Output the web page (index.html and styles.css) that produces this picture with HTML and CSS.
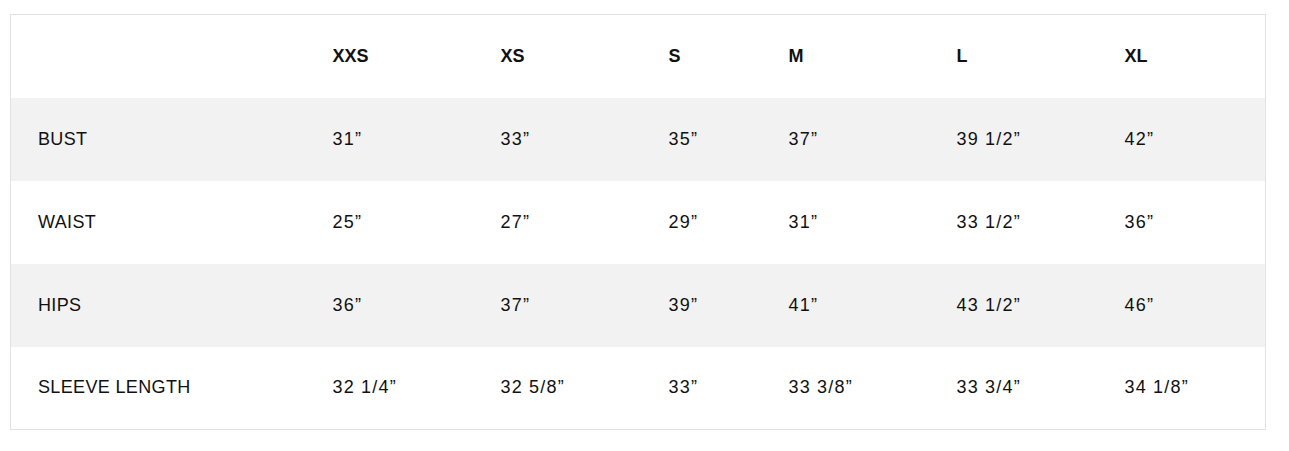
FILE: index.html
```html
<!DOCTYPE html>
<html>
<head>
<meta charset="utf-8">
<link rel="stylesheet" href="styles.css">
</head>
<body>
<div class="wrap">
<table class="size-table">
  <colgroup>
    <col class="c-label"><col class="c-w"><col class="c-w"><col class="c-n"><col class="c-w"><col class="c-w"><col class="c-last">
  </colgroup>
  <thead>
    <tr><th></th><th>XXS</th><th>XS</th><th>S</th><th>M</th><th>L</th><th>XL</th></tr>
  </thead>
  <tbody>
    <tr class="alt"><td class="lbl">BUST</td><td>31”</td><td>33”</td><td>35”</td><td>37”</td><td>39 1/2”</td><td>42”</td></tr>
    <tr><td class="lbl">WAIST</td><td>25”</td><td>27”</td><td>29”</td><td>31”</td><td>33 1/2”</td><td>36”</td></tr>
    <tr class="alt"><td class="lbl">HIPS</td><td>36”</td><td>37”</td><td>39”</td><td>41”</td><td>43 1/2”</td><td>46”</td></tr>
    <tr><td class="lbl">SLEEVE LENGTH</td><td>32 1/4”</td><td>32 5/8”</td><td>33”</td><td>33 3/8”</td><td>33 3/4”</td><td>34 1/8”</td></tr>
  </tbody>
</table>
</div>
</body>
</html>
```

FILE: styles.css
```css
html, body {
  margin: 0;
  padding: 0;
  background: #ffffff;
}
.wrap {
  padding: 14px 0 0 10px;
}
.size-table {
  width: 1255px;
  border-collapse: collapse;
  table-layout: fixed;
  border: 1px solid #e2e2e2;
  font-family: "Liberation Sans", Arial, sans-serif;
  font-size: 18px;
  color: #111111;
}
.c-label { width: 294px; }
.c-w { width: 168px; }
.c-n { width: 120px; }
.c-last { width: 169px; }
.size-table th,
.size-table td {
  height: 83px;
  padding: 0 0 0 28px;
  text-align: left;
  vertical-align: middle;
  box-sizing: border-box;
  white-space: nowrap;
}
.size-table th {
  font-weight: bold;
}
.size-table td {
  letter-spacing: 1.2px;
}
.size-table td.lbl {
  padding-left: 27px;
  letter-spacing: 0.35px;
}
.size-table tr.alt td {
  background: #f2f2f2;
}
```
